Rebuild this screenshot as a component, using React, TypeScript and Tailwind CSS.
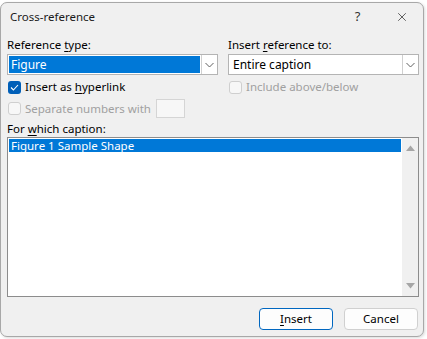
import { X } from 'lucide-react';

const font = 'font-["Noto_Sans","Open_Sans",sans-serif]';

function Chevron() {
  return (
    <svg width="9" height="6" viewBox="0 0 9 6" className="text-[#606060]">
      <path d="M0.5 1 L4.5 5 L8.5 1" fill="none" stroke="currentColor" strokeWidth="1" />
    </svg>
  );
}

function Checkbox({ checked, disabled }: { checked?: boolean; disabled?: boolean }) {
  if (checked) {
    return (
      <div className="w-[13px] h-[13px] rounded-[3px] bg-[#005fb8] flex items-center justify-center shrink-0">
        <svg width="9" height="7" viewBox="0 0 9 7">
          <path d="M1 3.5 L3.4 6 L8 1" fill="none" stroke="white" strokeWidth="1.1" />
        </svg>
      </div>
    );
  }
  return (
    <div
      className={`w-[13px] h-[13px] rounded-[3px] border shrink-0 ${
        disabled ? 'border-[#cfcfcf] bg-[#f7f7f7]' : 'border-[#8a8a8a] bg-white'
      }`}
    />
  );
}

function Combo({ value, selected, width }: { value: string; selected?: boolean; width: string }) {
  return (
    <div className={`${width} h-[21px] border border-[#b4b4b4] bg-white flex items-stretch`}>
      <div className="flex-1 p-px flex">
        <div
          className={`flex-1 flex items-center text-[12px] ${
            selected ? 'bg-[#0078d7] text-white pl-[2px]' : 'pl-[3px] text-black'
          }`}
        >
          {value}
        </div>
      </div>
      <div className="w-[16px] border-l border-[#d0d0d0] flex items-center justify-center">
        <Chevron />
      </div>
    </div>
  );
}

function Arrow({ up }: { up?: boolean }) {
  return (
    <svg width="9" height="6" viewBox="0 0 9 6">
      <path d={up ? 'M0 6 L4.5 0.5 L9 6 Z' : 'M0 0 L4.5 5.5 L9 0 Z'} fill="#a6a6a6" />
    </svg>
  );
}

export default function App() {
  return (
    <div className={`w-[427px] h-[339px] bg-white pt-[2px] ${font} text-[11.5px] text-black`}>
      <div className="w-[424px] h-[335px] rounded-[7px] border border-[#a8a8a8] bg-[#f0f0f0] shadow-[1px_1px_3px_rgba(0,0,0,0.15)] flex flex-col overflow-hidden">
        {/* Title bar */}
        <div className="h-[28px] flex items-center pl-[9px] shrink-0">
          <span className="flex-1 text-[11.5px] text-[#1a1a1a]">Cross-reference</span>
          <span className="w-[47px] text-center text-[13px] text-[#333]">?</span>
          <span className="w-[42px] flex justify-center">
            <X size={14} strokeWidth={1.2} className="text-[#222]" />
          </span>
        </div>

        {/* Body */}
        <div className="flex-1 flex flex-col pl-[6px] pr-[4px] pt-[5px]">
          <div className="flex gap-[10px]">
            {/* Left column */}
            <div className="w-[211px] flex flex-col">
              <div className="h-[18px] leading-[18px]">
                Reference <u className="underline-offset-2">t</u>ype:
              </div>
              <Combo value="Figure" selected width="w-[211px]" />
              <div className="h-[20px] mt-[2px] flex items-center gap-[4px] pl-px">
                <Checkbox checked />
                <span className="whitespace-nowrap">
                  Insert as <u className="underline-offset-2">h</u>yperlink
                </span>
              </div>
              <div className="h-[23px] flex items-center pl-px">
                <Checkbox disabled />
                <span className="ml-[4px] text-[#a0a0a0] w-[131px] whitespace-nowrap">Separate numbers with</span>
                <div className="w-[29px] h-[19px] border border-[#d5d5d5] bg-[#f7f7f7] shrink-0" />
              </div>
            </div>

            {/* Right column */}
            <div className="w-[191px] flex flex-col">
              <div className="h-[18px] leading-[18px]">
                Insert <u className="underline-offset-2">r</u>eference to:
              </div>
              <Combo value="Entire caption" width="w-[191px]" />
              <div className="h-[20px] mt-[2px] flex items-center gap-[4px] pl-px">
                <Checkbox disabled />
                <span className="text-[#a0a0a0] whitespace-nowrap">Include above/below</span>
              </div>
            </div>
          </div>

          <div className="h-[17px] leading-[17px]">
            For <u className="underline-offset-2">w</u>hich caption:
          </div>
          <div className="w-[412px] h-[160px] border border-[#8c8c8c] bg-white flex">
            <div className="flex-1 p-px">
              <div className="h-[13px] bg-[#0078d7] text-white leading-[13px] pl-[2px]">
                Figure 1 Sample Shape
              </div>
            </div>
            <div className="w-[16px] bg-[#f0f0f0] flex flex-col items-center justify-between py-[7px]">
              <Arrow up />
              <Arrow />
            </div>
          </div>

          {/* Buttons */}
          <div className="flex justify-end gap-[11px] mt-[11px] pr-[1px]">
            <button className="w-[74px] h-[22px] rounded-[4px] border border-[#0067c0] bg-[#fdfdfd] text-[11.5px]">
              <u className="underline-offset-2">I</u>nsert
            </button>
            <button className="w-[74px] h-[22px] rounded-[4px] border border-[#d0d0d0] bg-[#fdfdfd] text-[11.5px]">
              Cancel
            </button>
          </div>
        </div>
      </div>
    </div>
  );
}
